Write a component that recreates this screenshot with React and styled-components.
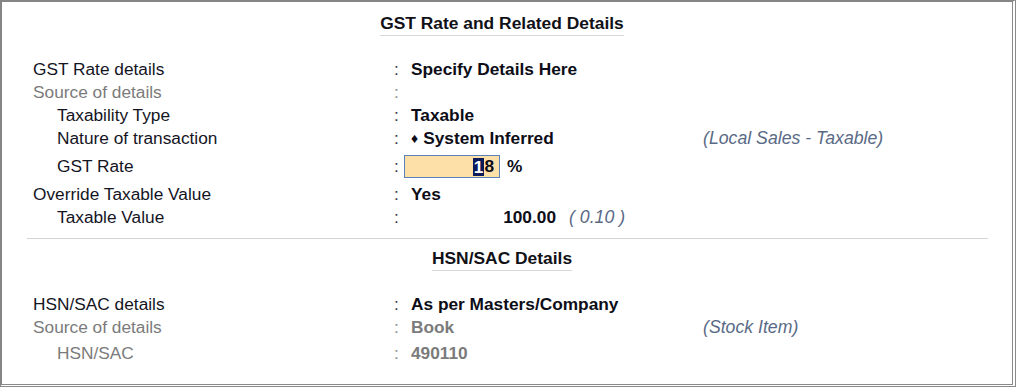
import React from "react";
import styled, { createGlobalStyle } from "styled-components";

const Global = createGlobalStyle`
  html, body { margin: 0; padding: 0; background: #ffffff; }
  body { font-family: "Liberation Sans", Arial, sans-serif; }
`;

const Frame = styled.div`
  box-sizing: border-box;
  width: 1016px;
  height: 387px;
  background: #ffffff;
  border-left: 2px solid #858585;
  border-top: 2px solid #858585;
  border-right: 4px double #8a8a8a;
  border-bottom: 3px double #8a8a8a;
  padding: 11px 24px 0 25px;
  display: flex;
  flex-direction: column;
  font-size: 17.3px;
  color: #15151f;
`;

const TitleBar = styled.div`
  display: flex;
  justify-content: center;
  padding-right: 11px;
  margin-top: ${(p) => p.$top || 0}px;
`;

const Title = styled.div`
  font-weight: bold;
  font-size: 17.4px;
  line-height: 20px;
  color: #111118;
  padding-bottom: 2px;
  border-bottom: 1px solid #d8d8d8;
`;

const Rows = styled.div`
  display: flex;
  flex-direction: column;
  margin-top: ${(p) => p.$top || 22}px;
  padding-left: 6px;
`;

const Row = styled.div`
  display: grid;
  grid-template-columns: 361px 10px 299px 1fr;
  align-items: center;
  height: ${(p) => p.$h || 23}px;
  margin-top: ${(p) => p.$mt || 0}px;
  line-height: 23px;
  white-space: nowrap;
`;

const Label = styled.div`
  padding-left: ${(p) => (p.$indent ? 24 : 0)}px;
  color: ${(p) => (p.$muted ? "#7b7b7b" : "#15151f")};
`;

const Colon = styled.div`
  color: ${(p) => (p.$muted ? "#8a8a8a" : "#333340")};
`;

const Value = styled.div`
  display: flex;
  align-items: center;
  padding-left: ${(p) => (p.$flush ? 0 : 7)}px;
  font-weight: bold;
  color: ${(p) => (p.$muted ? "#7b7b7b" : "#0d0d18")};
`;

const Diamond = styled.span`
  font-size: 14px;
  margin-right: 5px;
  color: #0d0d18;
`;

const Note = styled.div`
  font-style: italic;
  font-size: 17.7px;
  color: #5a6a86;
`;

const RateBox = styled.div`
  box-sizing: border-box;
  width: 96px;
  height: 23px;
  background: #fde0a8;
  border: 1px solid #5a82b8;
  display: flex;
  align-items: center;
  justify-content: flex-end;
  padding-right: 5px;
  font-weight: bold;
  color: #0d0d18;
`;

const Cursor = styled.span`
  background: #0b1a5a;
  color: #ffffff;
  line-height: 18px;
  padding: 0 1px;
`;

const Unit = styled.span`
  margin-left: 7px;
`;

const Amount = styled.span`
  display: inline-block;
  width: 145px;
  text-align: right;
`;

const Paren = styled.span`
  margin-left: 13px;
  font-weight: normal;
  font-style: italic;
  font-size: 17.7px;
  color: #5a6a86;
`;

const Divider = styled.div`
  height: 1px;
  background: #d4d4d4;
  margin-top: 9px;
`;

export default function App() {
  return (
    <>
      <Global />
      <Frame>
        <TitleBar>
          <Title>GST Rate and Related Details</Title>
        </TitleBar>
        <Rows>
          <Row>
            <Label>GST Rate details</Label>
            <Colon>:</Colon>
            <Value>Specify Details Here</Value>
            <Note />
          </Row>
          <Row>
            <Label $muted>Source of details</Label>
            <Colon $muted>:</Colon>
            <Value />
            <Note />
          </Row>
          <Row>
            <Label $indent>Taxability Type</Label>
            <Colon>:</Colon>
            <Value>Taxable</Value>
            <Note />
          </Row>
          <Row>
            <Label $indent>Nature of transaction</Label>
            <Colon>:</Colon>
            <Value>
              <Diamond>♦</Diamond>System Inferred
            </Value>
            <Note>(Local Sales - Taxable)</Note>
          </Row>
          <Row $h={33}>
            <Label $indent>GST Rate</Label>
            <Colon>:</Colon>
            <Value $flush>
              <RateBox>
                <Cursor>1</Cursor>8
              </RateBox>
              <Unit>%</Unit>
            </Value>
            <Note />
          </Row>
          <Row>
            <Label>Override Taxable Value</Label>
            <Colon>:</Colon>
            <Value>Yes</Value>
            <Note />
          </Row>
          <Row>
            <Label $indent>Taxable Value</Label>
            <Colon>:</Colon>
            <Value>
              <Amount>100.00</Amount>
              <Paren>( 0.10 )</Paren>
            </Value>
            <Note />
          </Row>
        </Rows>
        <Divider />
        <TitleBar $top={9}>
          <Title>HSN/SAC Details</Title>
        </TitleBar>
        <Rows $top={22}>
          <Row>
            <Label>HSN/SAC details</Label>
            <Colon>:</Colon>
            <Value>As per Masters/Company</Value>
            <Note />
          </Row>
          <Row>
            <Label $muted>Source of details</Label>
            <Colon $muted>:</Colon>
            <Value $muted>Book</Value>
            <Note>(Stock Item)</Note>
          </Row>
          <Row $mt={3}>
            <Label $muted $indent>HSN/SAC</Label>
            <Colon $muted>:</Colon>
            <Value $muted>490110</Value>
            <Note />
          </Row>
        </Rows>
      </Frame>
    </>
  );
}
